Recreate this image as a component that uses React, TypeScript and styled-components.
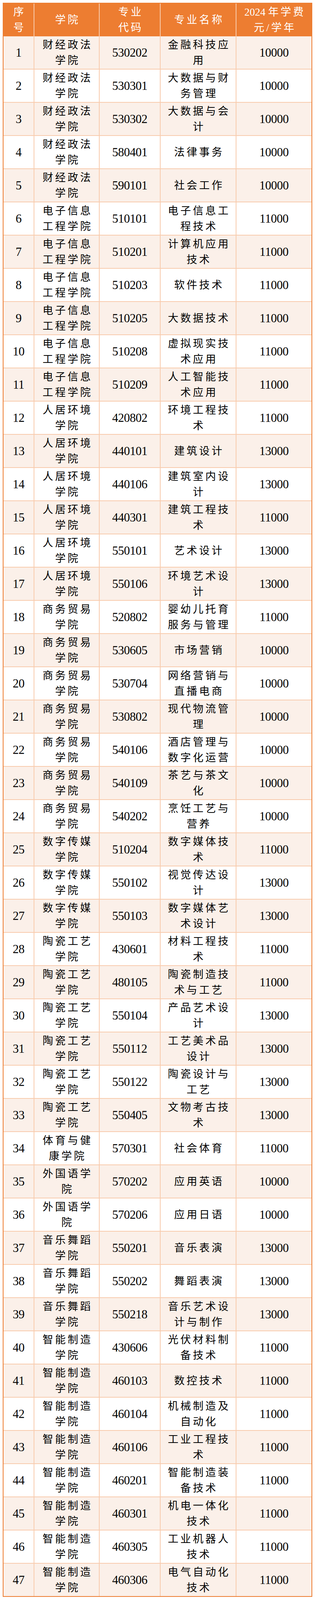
import * as React from 'react';
import styled, { createGlobalStyle } from 'styled-components';

type Major = [string, string, string, string];

const majors: Major[] = [
    ['财经政法学院', '530202', '金融科技应用', '10000'],
    ['财经政法学院', '530301', '大数据与财务管理', '10000'],
    ['财经政法学院', '530302', '大数据与会计', '10000'],
    ['财经政法学院', '580401', '法律事务', '10000'],
    ['财经政法学院', '590101', '社会工作', '10000'],
    ['电子信息工程学院', '510101', '电子信息工程技术', '11000'],
    ['电子信息工程学院', '510201', '计算机应用技术', '11000'],
    ['电子信息工程学院', '510203', '软件技术', '11000'],
    ['电子信息工程学院', '510205', '大数据技术', '11000'],
    ['电子信息工程学院', '510208', '虚拟现实技术应用', '11000'],
    ['电子信息工程学院', '510209', '人工智能技术应用', '11000'],
    ['人居环境学院', '420802', '环境工程技术', '11000'],
    ['人居环境学院', '440101', '建筑设计', '13000'],
    ['人居环境学院', '440106', '建筑室内设计', '13000'],
    ['人居环境学院', '440301', '建筑工程技术', '11000'],
    ['人居环境学院', '550101', '艺术设计', '13000'],
    ['人居环境学院', '550106', '环境艺术设计', '13000'],
    ['商务贸易学院', '520802', '婴幼儿托育服务与管理', '11000'],
    ['商务贸易学院', '530605', '市场营销', '10000'],
    ['商务贸易学院', '530704', '网络营销与直播电商', '10000'],
    ['商务贸易学院', '530802', '现代物流管理', '10000'],
    ['商务贸易学院', '540106', '酒店管理与数字化运营', '10000'],
    ['商务贸易学院', '540109', '茶艺与茶文化', '10000'],
    ['商务贸易学院', '540202', '烹饪工艺与营养', '10000'],
    ['数字传媒学院', '510204', '数字媒体技术', '11000'],
    ['数字传媒学院', '550102', '视觉传达设计', '13000'],
    ['数字传媒学院', '550103', '数字媒体艺术设计', '13000'],
    ['陶瓷工艺学院', '430601', '材料工程技术', '11000'],
    ['陶瓷工艺学院', '480105', '陶瓷制造技术与工艺', '11000'],
    ['陶瓷工艺学院', '550104', '产品艺术设计', '13000'],
    ['陶瓷工艺学院', '550112', '工艺美术品设计', '13000'],
    ['陶瓷工艺学院', '550122', '陶瓷设计与工艺', '13000'],
    ['陶瓷工艺学院', '550405', '文物考古技术', '13000'],
    ['体育与健康学院', '570301', '社会体育', '11000'],
    ['外国语学院', '570202', '应用英语', '10000'],
    ['外国语学院', '570206', '应用日语', '10000'],
    ['音乐舞蹈学院', '550201', '音乐表演', '13000'],
    ['音乐舞蹈学院', '550202', '舞蹈表演', '13000'],
    ['音乐舞蹈学院', '550218', '音乐艺术设计与制作', '13000'],
    ['智能制造学院', '430606', '光伏材料制备技术', '11000'],
    ['智能制造学院', '460103', '数控技术', '11000'],
    ['智能制造学院', '460104', '机械制造及自动化', '11000'],
    ['智能制造学院', '460106', '工业工程技术', '11000'],
    ['智能制造学院', '460201', '智能制造装备技术', '11000'],
    ['智能制造学院', '460301', '机电一体化技术', '11000'],
    ['智能制造学院', '460305', '工业机器人技术', '11000'],
    ['智能制造学院', '460306', '电气自动化技术', '11000'],
];

const GlobalStyle = createGlobalStyle`
    * { box-sizing: border-box; }
    body {
        margin: 0;
        background: #ffffff;
        font-family: "Liberation Serif", "Noto Sans CJK SC", serif;
    }
`;

const Page = styled.div`
    padding: 7px;
`;

const Table = styled.div`
    width: 792px;
    border: 2px solid #ed7d31;
    display: flex;
    flex-direction: column;
`;

const columns = '77px 165px 154px 192px 192px';

const HeaderRow = styled.div`
    display: grid;
    grid-template-columns: ${columns};
    column-gap: 2px;
    height: 84px;
    background: #f8cbad;
`;

const HeaderCell = styled.div`
    display: flex;
    align-items: center;
    justify-content: center;
    text-align: center;
    background: #ed7d31;
    color: #ffffff;
    font-size: 27px;
    line-height: 40px;
    letter-spacing: 5px;
    padding-left: 5px;
`;

const Digits = styled.span`
    letter-spacing: 0;
`;

const BodyRow = styled.div`
    display: grid;
    grid-template-columns: ${columns};
    column-gap: 2px;
    height: 83px;
    background: #f8cbad;

    & + & {
        height: 85px;
        border-top: 2px solid #f8cbad;
    }
`;

const Cell = styled.div<{ $alt: boolean; $wide?: boolean }>`
    display: flex;
    align-items: center;
    justify-content: center;
    text-align: center;
    background: ${({ $alt }) => ($alt ? '#fbf0e9' : '#ffffff')};
    color: #000000;
    font-size: 27px;
    line-height: 40px;
    letter-spacing: 5px;
    padding: 0 ${({ $wide }) => ($wide ? '10px' : '8px')} 0 ${({ $wide }) => ($wide ? '15px' : '13px')};
`;

const NumCell = styled(Cell)`
    font-size: 31px;
    letter-spacing: -0.5px;
    padding: 0;
`;

const App: React.FC = () => {
    return (
        <Page>
            <GlobalStyle />
            <Table>
                <HeaderRow>
                    <HeaderCell>序<br />号</HeaderCell>
                    <HeaderCell>学院</HeaderCell>
                    <HeaderCell>专业<br />代码</HeaderCell>
                    <HeaderCell>专业名称</HeaderCell>
                    <HeaderCell>
                        <span><Digits>2024 </Digits>年学费<br />元/学年</span>
                    </HeaderCell>
                </HeaderRow>
                {majors.map(([college, code, name, fee], i) => {
                    const alt = i % 2 === 0;
                    return (
                        <BodyRow key={code + i}>
                            <NumCell $alt={alt}>{i + 1}</NumCell>
                            <Cell $alt={alt}>{college}</Cell>
                            <NumCell $alt={alt}>{code}</NumCell>
                            <Cell $alt={alt} $wide>{name}</Cell>
                            <NumCell $alt={alt}>{fee}</NumCell>
                        </BodyRow>
                    );
                })}
            </Table>
        </Page>
    );
};

export default App;
